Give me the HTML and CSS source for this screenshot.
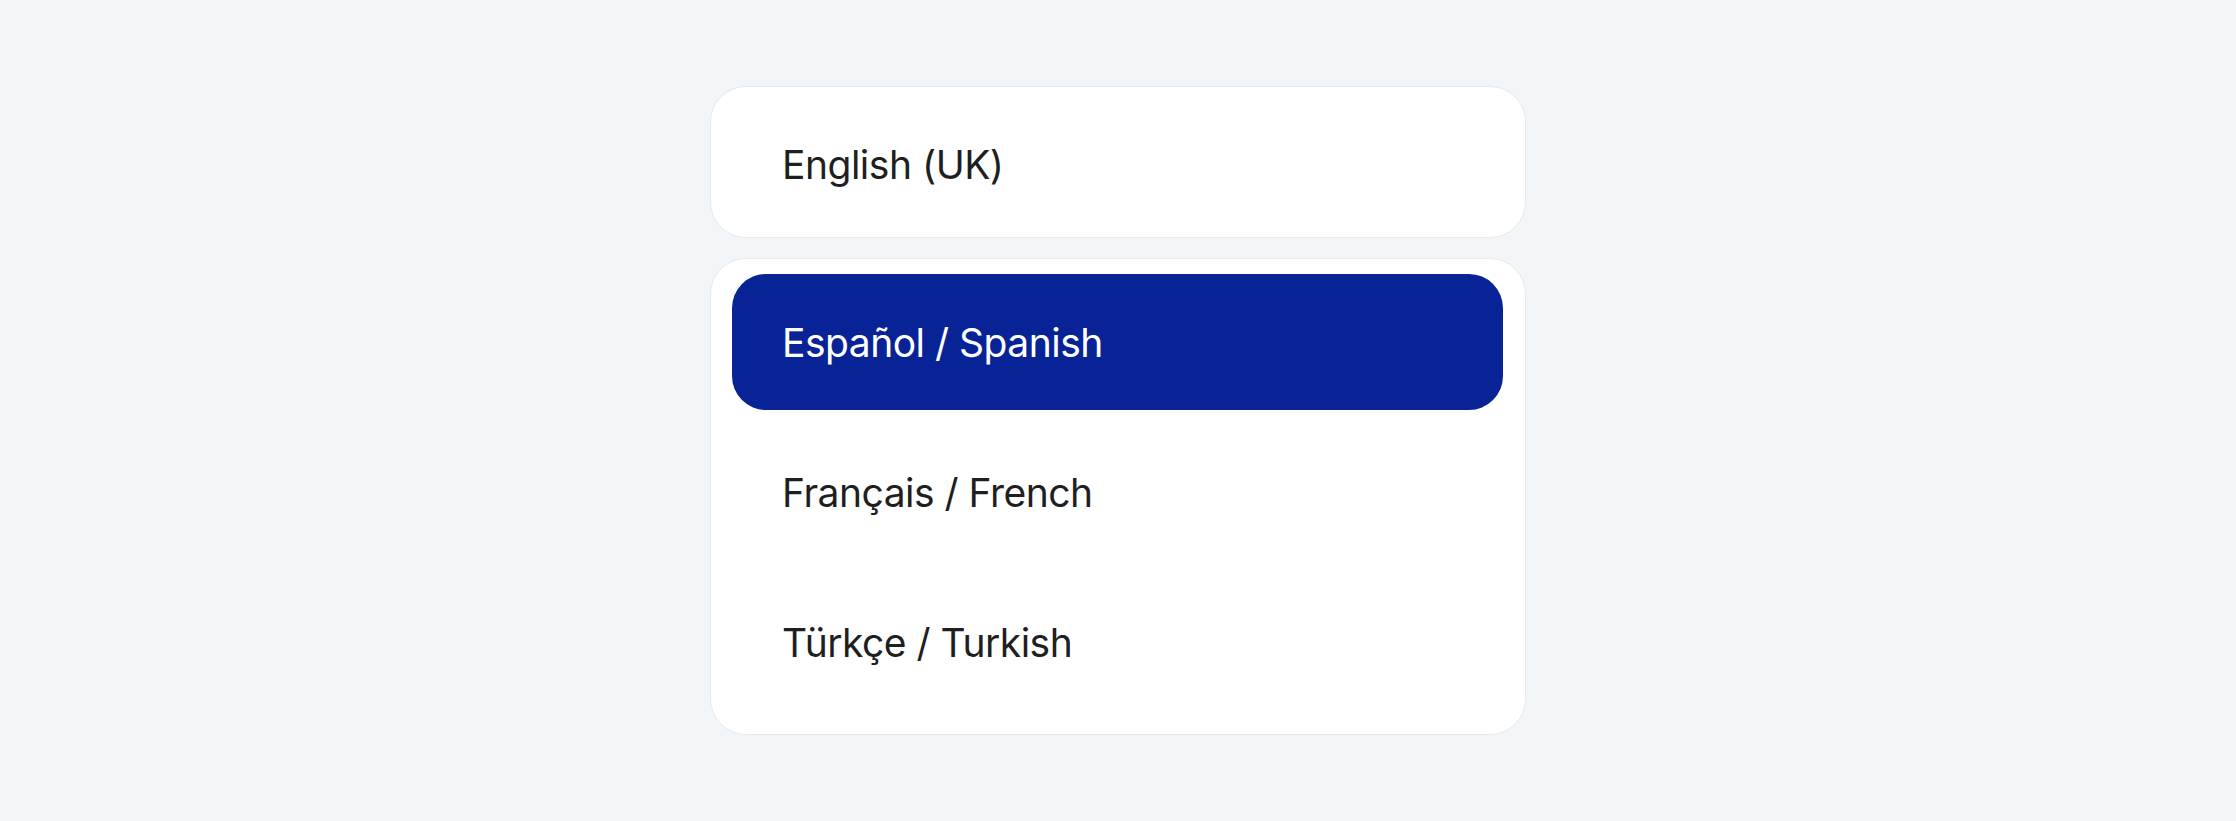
FILE: index.html
```html
<!DOCTYPE html>
<html lang="en">
<head>
<meta charset="utf-8">
<title>Language</title>
<link rel="stylesheet" href="styles.css">
</head>
<body>
<main class="page">
  <div class="stack">
    <section class="card card-current">
      <div class="row">English (UK)</div>
    </section>
    <section class="card card-list">
      <div class="row row-selected">Español / Spanish</div>
      <div class="row">Français / French</div>
      <div class="row">Türkçe / Turkish</div>
    </section>
  </div>
</main>
</body>
</html>
```

FILE: styles.css
```css
html, body {
  margin: 0;
  padding: 0;
  height: 100%;
}
body {
  background: #f3f6f9;
  font-family: Inter, "Noto Sans", "Liberation Sans", sans-serif;
  color: #1f1f1f;
}
.page {
  height: 100vh;
  display: flex;
  align-items: center;
  justify-content: center;
}
.stack {
  width: 816px;
  display: flex;
  flex-direction: column;
  gap: 20px;
}
.card {
  background: #ffffff;
  border: 1px solid #e6e9ee;
  border-radius: 36px;
  box-sizing: border-box;
}
.card-current {
  height: 152px;
  display: flex;
  align-items: center;
  padding: 5px 0 0 71px;
}
.card-current .row {
  padding: 0;
  height: auto;
}
.card-list {
  height: 477px;
  padding: 15px 22px 24px 21px;
  display: flex;
  flex-direction: column;
  gap: 14px;
}
.row {
  height: 136px;
  display: flex;
  align-items: center;
  padding-left: 50px;
  font-size: 39px;
  line-height: 1;
  letter-spacing: -0.5px;
  border-radius: 34px;
  box-sizing: border-box;
}
.row-selected {
  background: #082396;
  color: #ffffff;
}
```
